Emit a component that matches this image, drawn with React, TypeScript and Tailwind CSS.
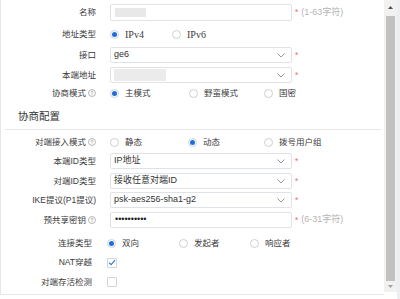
import { ReactNode } from "react";
import clsx from "clsx";

const font = { fontFamily: '"Liberation Sans", "Noto Sans CJK SC", sans-serif' };

function HelpIcon() {
  return (
    <svg width="8" height="8" viewBox="0 0 16 16" className="ml-[2px] shrink-0" fill="none" stroke="#999" strokeWidth="1.4">
      <circle cx="8" cy="8" r="7" />
      <path d="M6 6.2a2 2 0 1 1 2.8 1.8c-.5.3-.8.7-.8 1.3v.5" strokeLinecap="round" />
      <circle cx="8" cy="11.8" r="0.6" fill="#999" stroke="none" />
    </svg>
  );
}

function Chevron() {
  return (
    <svg width="8" height="5" viewBox="0 0 8 5" fill="none" stroke="#999" strokeWidth="1">
      <path d="M0.5 0.5 L4 4 L7.5 0.5" />
    </svg>
  );
}

function Required({ hint }: { hint?: string }) {
  return (
    <span className="ml-[3px] flex items-center text-[#f56c6c]">
      *{hint && <span className="ml-[3px] text-[9px] text-[#b4b4b4]">{hint}</span>}
    </span>
  );
}

function Row({
  label,
  help,
  narrow,
  className,
  children,
}: {
  label: string;
  help?: boolean;
  narrow?: boolean;
  className?: string;
  children: ReactNode;
}) {
  return (
    <div className={clsx("flex items-center", className)}>
      <div
        className={clsx(
          "flex shrink-0 items-center justify-end text-[#3a3a3a]",
          narrow ? "mr-[15px] w-[91px]" : "mr-[14px] w-[95px]"
        )}
      >
        <span className="whitespace-nowrap">{label}</span>
        {help && <HelpIcon />}
      </div>
      {children}
    </div>
  );
}

function Radio({ checked, label, w, serif }: { checked?: boolean; label: string; w: string; serif?: boolean }) {
  return (
    <div className={clsx("flex items-center", w)}>
      <span
        className={clsx(
          "flex h-[9px] w-[9px] shrink-0 items-center justify-center rounded-full border bg-white",
          checked ? "border-[#c5d3e8]" : "border-[#cfcfcf]"
        )}
      >
        {checked && <span className="h-[5px] w-[5px] rounded-full bg-[#1d6fd8]" />}
      </span>
      <span
        className={clsx("ml-[6px] whitespace-nowrap text-[#3a3a3a]", serif && "text-[10px]")}
        style={serif ? { fontFamily: '"Liberation Serif", serif' } : undefined}
      >
        {label}
      </span>
    </div>
  );
}

function Select({ value, blur }: { value?: string; blur?: boolean }) {
  return (
    <div className="flex h-full w-[182px] items-center justify-between rounded-[2px] border border-[#dfe3e8] bg-white pl-[3px] pr-[6px]">
      {blur ? <span className="h-[12px] w-[52px] bg-[#ebebeb]" /> : <span className="text-[9px] text-[#333]">{value}</span>}
      <Chevron />
    </div>
  );
}

function Checkbox({ checked }: { checked?: boolean }) {
  return (
    <span className="flex h-[10px] w-[10px] items-center justify-center rounded-[1px] border border-[#cfd6e0] bg-white">
      {checked && (
        <svg width="8" height="7" viewBox="0 0 8 7" fill="none" stroke="#2f7ad8" strokeWidth="1.2">
          <path d="M1 3.6 L3.1 5.6 L7 1.2" />
        </svg>
      )}
    </span>
  );
}

export default function App() {
  return (
    <div className="relative flex h-[299px] w-[400px] overflow-hidden bg-white text-[8.5px]" style={font}>
      <div className="flex h-[295px] w-[384px] flex-col border-b border-l border-[#e6e6e6]">
        <Row label="名称" className="mt-[4px] h-[17px]">
          <div className="flex h-full w-[182px] items-center rounded-[2px] border border-[#dfe3e8] pl-[4px]">
            <span className="h-[9px] w-[31px] bg-[#e8e8e8]" />
          </div>
          <Required hint="(1-63字符)" />
        </Row>
        <Row label="地址类型" className="mt-[3px] h-[20px]">
          <Radio checked label="IPv4" w="w-[62px]" serif />
          <Radio label="IPv6" w="w-[62px]" serif />
        </Row>
        <Row label="接口" className="mt-[3px] h-[16px]">
          <Select value="ge6" />
          <Required />
        </Row>
        <Row label="本端地址" className="mt-[4px] h-[16px]">
          <Select blur />
          <Required />
        </Row>
        <Row label="协商模式" help className="h-[20px]">
          <Radio checked label="主模式" w="w-[79px]" />
          <Radio label="野蛮模式" w="w-[75px]" />
          <Radio label="国密" w="w-[60px]" />
        </Row>

        <div className="ml-[4px] mr-[3px] flex h-[27px] items-end border-b border-[#e6e6e6] pb-[4px] pl-[13px] text-[10.5px] text-[#333]">
          协商配置
        </div>

        <Row label="对端接入模式" help className="mt-[2px] h-[20px]">
          <Radio label="静态" w="w-[78px]" />
          <Radio checked label="动态" w="w-[76px]" />
          <Radio label="拨号用户组" w="w-[70px]" />
        </Row>
        <Row label="本端ID类型" className="mt-[1px] h-[16px]">
          <Select value="IP地址" />
          <Required />
        </Row>
        <Row label="对端ID类型" className="mt-[4px] h-[16px]">
          <Select value="接收任意对端ID" />
          <Required />
        </Row>
        <Row label="IKE提议(P1提议)" className="mt-[3px] h-[16px]">
          <Select value="psk-aes256-sha1-g2" />
          <Required />
        </Row>
        <Row label="预共享密钥" help className="mt-[4px] h-[16px]">
          <div className="flex h-full w-[182px] items-center rounded-[2px] border border-[#dfe3e8] pl-[4px] text-[9px] text-[#222]">
            ••••••••••
          </div>
          <Required hint="(6-31字符)" />
        </Row>
        <Row label="连接类型" narrow className="mt-[5px] h-[20px]">
          <Radio checked label="双向" w="w-[72px]" />
          <Radio label="发起者" w="w-[71px]" />
          <Radio label="响应者" w="w-[60px]" />
        </Row>
        <Row label="NAT穿越" narrow className="h-[19px]">
          <Checkbox checked />
        </Row>
        <Row label="对端存活检测" narrow className="h-[20px]">
          <Checkbox />
        </Row>
      </div>

      {/* scrollbar */}
      <div className="flex h-[292px] w-[13px] flex-col items-center bg-[#f1f1f1]">
        <div className="flex h-[14px] items-center justify-center">
          <svg width="5" height="3" viewBox="0 0 5 3">
            <path d="M0 3 L2.5 0 L5 3 Z" fill="#505050" />
          </svg>
        </div>
        <div className="mt-[2px] h-[265px] w-[9px] bg-[#c1c1c1]" />
        <div className="flex flex-1 items-center justify-center">
          <svg width="5" height="3" viewBox="0 0 5 3">
            <path d="M0 0 L2.5 3 L5 0 Z" fill="#a3a3a3" />
          </svg>
        </div>
      </div>
      <div className="h-full w-[3px] bg-[#eceff2]" />
    </div>
  );
}
